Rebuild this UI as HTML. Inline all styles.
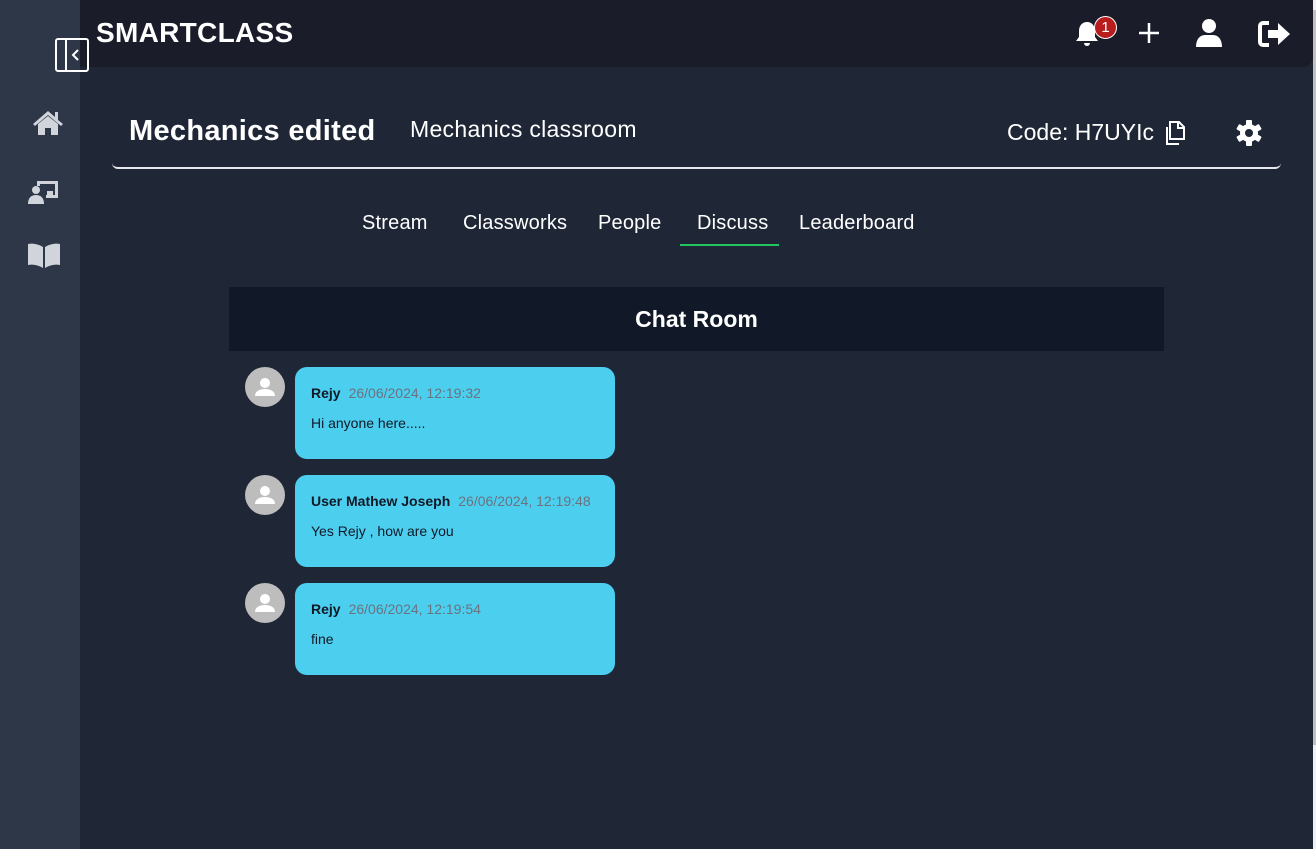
<!DOCTYPE html>
<html><head><meta charset="utf-8"><style>
*{margin:0;padding:0;box-sizing:border-box}
body{width:1316px;height:849px;overflow:hidden;background:#1f2737;font-family:"Liberation Sans",sans-serif;color:#fff;position:relative}
.abs{position:absolute}
.side{left:0;top:0;width:80px;height:849px;background:#2d3748}
.top{left:80px;top:0;width:1233px;height:67px;background:#1a1c2a;border-bottom-right-radius:10px}
.brand{left:96px;top:17px;font-size:28px;font-weight:bold;letter-spacing:0.3px}
.card{left:112px;top:95px;width:1169px;height:74px;border-bottom:2px solid #e5e7eb;border-radius:0 0 6px 6px}
.tab{top:212px;font-size:20px;color:#fff;letter-spacing:0.2px}
.chat{left:229px;top:287px;width:935px;height:64px;background:#111827;text-align:center;font-weight:bold;font-size:23px;line-height:64px}
.av{left:245px;width:40px;height:40px;border-radius:50%;background:#bdbdbd}
.bub{left:295px;width:320px;height:92px;border-radius:12px;background:#4ccfef;color:#111827}
.nm{position:absolute;left:16px;top:18px;font-size:14px;font-weight:bold}
.nm span{font-weight:normal;color:#6b7280;margin-left:8px;font-size:14px}
.tx{position:absolute;left:16px;top:48px;font-size:14px}
</style></head><body>
<div class="abs side"></div>
<div class="abs top"></div>
<div class="abs" style="left:1313px;top:0;width:3px;height:849px;background:#f1f1f1"></div>
<div class="abs" style="left:1313px;top:10px;width:3px;height:735px;background:#c1c1c1"></div>
<div class="abs brand">SMARTCLASS</div>
<svg class="abs" style="left:55px;top:38px" width="34" height="34" viewBox="0 0 34 34"><rect x="1" y="1" width="32" height="32" rx="2" fill="none" stroke="#fff" stroke-width="2"/><line x1="11" y1="1" x2="11" y2="33" stroke="#fff" stroke-width="2"/><path d="M23 12l-5 5 5 5" fill="none" stroke="#fff" stroke-width="2"/></svg>
<svg class="abs" style="left:32px;top:109px" width="32" height="28" viewBox="0 0 32 28"><path d="M16 2L1 15l2 2 13-11 13 11 2-2-5-4V3h-3v5z" fill="#d1d5db"/><path d="M6 15l10-8 10 8v11h-7v-7h-6v7H6z" fill="#d1d5db"/></svg>
<svg class="abs" style="left:28px;top:178px" width="32" height="26" viewBox="0 0 32 26"><path d="M9 3h21v17H18v-3h9V6H12v2H9z" fill="#d1d5db"/><rect x="19" y="13" width="6" height="4" fill="#d1d5db"/><circle cx="8" cy="12" r="4" fill="#d1d5db"/><path d="M0 26c0-6 3-9 8-9s8 3 8 9z" fill="#d1d5db"/></svg>
<svg class="abs" style="left:28px;top:242px" width="32" height="26" viewBox="0 0 32 26"><path d="M0 2c5-1 10 0 15 3v21C10 23 5 22 0 23z" fill="#d1d5db"/><path d="M32 2c-5-1-10 0-15 3v21c5-3 10-4 15-3z" fill="#d1d5db"/></svg>
<svg class="abs" style="left:1075px;top:20px" width="26" height="28" viewBox="0 0 26 28"><path d="M12 2c-5 0-8 4-8 9v6l-3 4h22l-3-4v-6c0-5-3-9-8-9z" fill="#fff"/><path d="M9 23a3 3 0 0 0 6 0z" fill="#fff"/></svg>
<div class="abs" style="left:1094px;top:16px;width:23px;height:23px;border-radius:50%;background:#b91c1c;border:1px solid #fff;font-size:15px;line-height:21px;text-align:center">1</div>
<svg class="abs" style="left:1138px;top:22px" width="22" height="22"><path d="M11 1v20M1 11h20" stroke="#fff" stroke-width="2.5"/></svg>
<svg class="abs" style="left:1196px;top:18px" width="26" height="30" viewBox="0 0 26 30"><circle cx="13" cy="8" r="7" fill="#fff"/><path d="M0 29c0-8 4-12 9-12h8c5 0 9 4 9 12z" fill="#fff"/></svg>
<svg class="abs" style="left:1258px;top:20px" width="34" height="28" viewBox="0 0 34 28"><path d="M11 3H5a3 3 0 0 0-3 3v16a3 3 0 0 0 3 3h6" fill="none" stroke="#fff" stroke-width="4"/><path d="M10 10h10V3l12 11-12 11v-7H10z" fill="#fff"/></svg>
<div class="abs card"></div>
<div class="abs" style="left:129px;top:115px;font-size:29px;font-weight:bold;letter-spacing:0.3px">Mechanics edited</div>
<div class="abs" style="left:410px;top:116px;font-size:23px;letter-spacing:0.3px">Mechanics classroom</div>
<div class="abs" style="left:1007px;top:119px;font-size:23px">Code: H7UYIc</div>
<svg class="abs" style="left:1163px;top:120px" width="22" height="26" viewBox="0 0 22 26"><path d="M7 2h9l5 5v12H7z" fill="none" stroke="#fff" stroke-width="2"/><path d="M4 7v17h12" fill="none" stroke="#fff" stroke-width="2"/><path d="M15 2v6h6" fill="none" stroke="#fff" stroke-width="2"/></svg>
<svg class="abs" style="left:1235px;top:119px" width="28" height="28" viewBox="0 0 28 28"><g fill="#fff"><circle cx="14" cy="14" r="9"/><rect x="11" y="1" width="6" height="26" rx="1"/><rect x="11" y="1" width="6" height="26" rx="1" transform="rotate(60 14 14)"/><rect x="11" y="1" width="6" height="26" rx="1" transform="rotate(120 14 14)"/></g><circle cx="14" cy="14" r="4" fill="#1f2737"/></svg>
<div class="abs tab" style="left:362px">Stream</div>
<div class="abs tab" style="left:463px">Classworks</div>
<div class="abs tab" style="left:598px">People</div>
<div class="abs tab" style="left:697px">Discuss</div>
<div class="abs tab" style="left:799px">Leaderboard</div>
<div class="abs" style="left:680px;top:244px;width:99px;height:2px;background:#22c55e"></div>
<div class="abs chat">Chat Room</div>
<div class="abs av" style="top:367px"><svg width="40" height="40"><circle cx="20" cy="16" r="5" fill="#fff"/><path d="M10 29c0-5 5-7 10-7s10 2 10 7z" fill="#fff"/></svg></div>
<div class="abs bub" style="top:367px"><div class="nm">Rejy<span>26/06/2024, 12:19:32</span></div><div class="tx">Hi anyone here.....</div></div>
<div class="abs av" style="top:475px"><svg width="40" height="40"><circle cx="20" cy="16" r="5" fill="#fff"/><path d="M10 29c0-5 5-7 10-7s10 2 10 7z" fill="#fff"/></svg></div>
<div class="abs bub" style="top:475px"><div class="nm">User Mathew Joseph<span>26/06/2024, 12:19:48</span></div><div class="tx">Yes Rejy , how are you</div></div>
<div class="abs av" style="top:583px"><svg width="40" height="40"><circle cx="20" cy="16" r="5" fill="#fff"/><path d="M10 29c0-5 5-7 10-7s10 2 10 7z" fill="#fff"/></svg></div>
<div class="abs bub" style="top:583px"><div class="nm">Rejy<span>26/06/2024, 12:19:54</span></div><div class="tx">fine</div></div>
</body></html>
